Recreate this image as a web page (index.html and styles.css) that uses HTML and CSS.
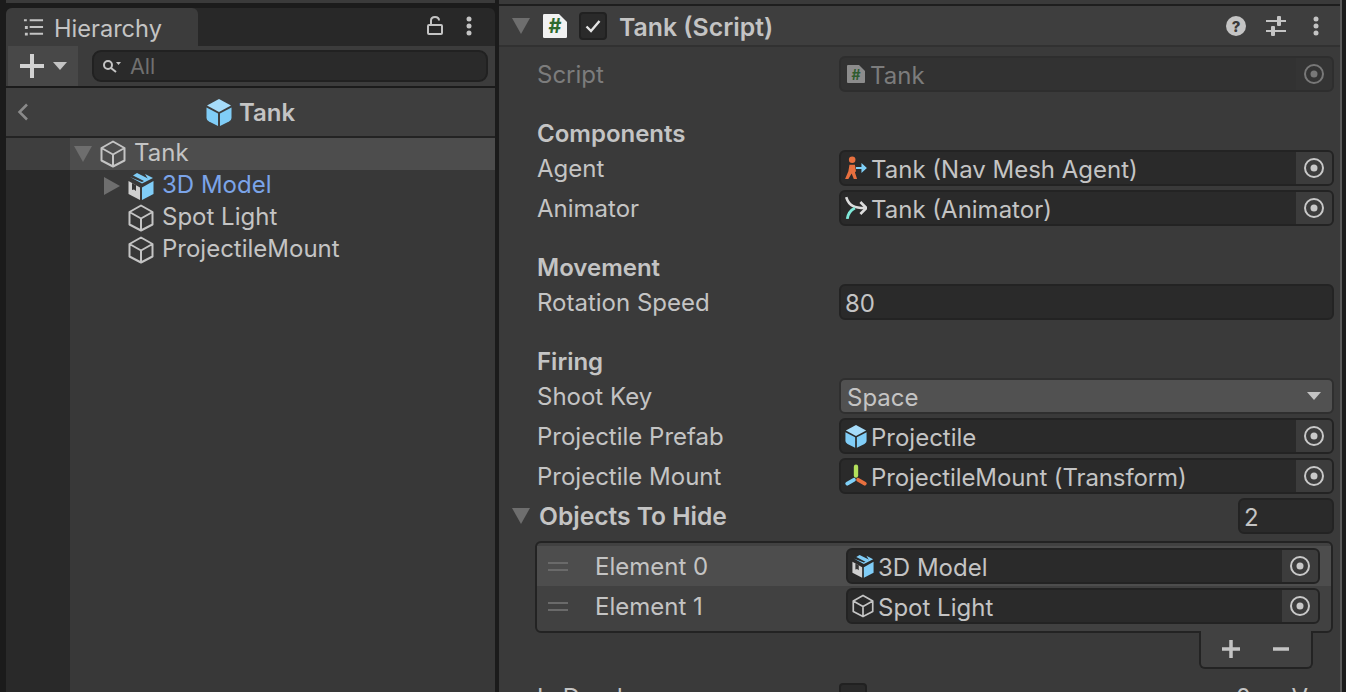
FILE: index.html
```html
<!DOCTYPE html>
<html>
<head>
<meta charset="UTF-8">
<title>Tank</title>
<link rel="stylesheet" href="styles.css">
</head>
<body>
<svg class="defs" width="0" height="0">
	<symbol id="cube" viewBox="0 0 26 28">
		<path d="M13 1.500 24.500 8v12.500L13 26.500 1.500 20.500V8zM1.500 8 13 14.500 24.500 8M13 14.500v12" fill="none" stroke="#c4c4c4" stroke-width="2" stroke-linejoin="round"/>
	</symbol>
	<symbol id="prefab" viewBox="0 0 26 28">
		<path d="M13 1 25 7.500 13 14 1 7.500z" fill="#a6dcfa"/>
		<path d="M.5 9.500 12 15.500V28L3 23.500Q.5 22 .5 20z" fill="#80cdf7"/>
		<path d="M25.500 9.500 14 15.500V28l9-4.500q2.500-1.500 2.500-3.500z" fill="#80cdf7"/>
	</symbol>
	<symbol id="model" viewBox="0 0 26 28">
		<path d="M9 1 21 7 17 9.500 5 3.500z" fill="#80cdf7"/>
		<path d="M2 5 14 11.500 25 6 17 2 20 7 14 10z" fill="#80cdf7"/>
		<path d="M.5 9 12 15.500V28L.5 22z" fill="#d0d0d0"/>
		<path d="M4 11 8 13.200V19L6 17.500 4 18z" fill="#353535"/>
		<path d="M25.500 9 14 15.500V28l11.500-6z" fill="#80cdf7"/>
	</symbol>
	<symbol id="target" viewBox="0 0 20 20">
		<circle cx="10" cy="10" r="9" fill="none" stroke="currentColor" stroke-width="2"/>
		<circle cx="10" cy="10" r="3.500" fill="currentColor"/>
	</symbol>
	<symbol id="csfile" viewBox="0 0 18 18">
		<path d="M0 1Q0 0 1 0H12L18 6V17Q18 18 17 18H1Q0 18 0 17z" fill="currentColor"/>
	</symbol>
</svg>

<div class="hierarchy">
	<div class="top-strip"></div>
	<div class="tabbar">
		<div class="tab">
			<svg class="tab-icon" viewBox="0 0 22 18"><path d="M7 2h14M7 9h14M7 16h14" stroke="#c4c4c4" stroke-width="2"/><path d="M1 1h3v2H1zM2 8h3v3H2zM2 15h3v3H2z" fill="#c4c4c4"/></svg>
			<span class="tab-name">Hierarchy</span>
		</div>
		<div class="tab-tools">
			<svg class="lock" viewBox="0 0 16 20"><path d="M4 8V4.500Q4 1 8 1t4 3.500" fill="none" stroke="#c4c4c4" stroke-width="2"/><rect x="1" y="9" width="14" height="9" rx="1" fill="none" stroke="#c4c4c4" stroke-width="2"/></svg>
			<svg class="kebab" viewBox="0 0 6 20"><circle cx="3" cy="3" r="2.500"/><circle cx="3" cy="10" r="2.500"/><circle cx="3" cy="17" r="2.500"/></svg>
		</div>
	</div>
	<div class="toolbar">
		<div class="add-btn">
			<svg class="plus" viewBox="0 0 24 24"><path d="M12 0v24M0 12h24" stroke="#d2d2d2" stroke-width="4"/></svg>
			<span class="caret"></span>
		</div>
		<div class="search">
			<svg class="search-icon" viewBox="0 0 20 14"><circle cx="6" cy="6" r="4" fill="none" stroke="#c4c4c4" stroke-width="2"/><path d="M9 9l5 4" stroke="#c4c4c4" stroke-width="2"/><path d="M14 3h5l-2.500 3z" fill="#c4c4c4"/></svg>
			All
		</div>
	</div>
	<div class="crumb">
		<svg class="back" viewBox="0 0 12 18"><path d="M10 1.500 2.500 9l7.500 7.500" fill="none" stroke="#8a8a8a" stroke-width="2.500"/></svg>
		<div class="crumb-title"><svg class="ico-cube"><use href="#prefab"/></svg>Tank</div>
	</div>
	<div class="tree">
		<div class="tree-row sel"><span class="arrow-down"></span><svg class="ico-cube"><use href="#cube"/></svg><span class="tree-name">Tank</span></div>
		<div class="tree-row child"><span class="arrow-right"></span><svg class="ico-cube"><use href="#model"/></svg><span class="tree-name blue">3D Model</span></div>
		<div class="tree-row child leaf"><svg class="ico-cube"><use href="#cube"/></svg><span class="tree-name">Spot Light</span></div>
		<div class="tree-row child leaf"><svg class="ico-cube"><use href="#cube"/></svg><span class="tree-name">ProjectileMount</span></div>
	</div>
</div>

<div class="inspector">
	<div class="top-strip"></div>
	<div class="comp-head">
		<span class="arrow-down"></span>
		<div class="script-icon"><svg><use href="#csfile"/></svg><span>#</span></div>
		<div class="check"><svg viewBox="0 0 16 14"><path d="M1.500 7.500 6 12 14.500 2" fill="none" stroke="#e4e4e4" stroke-width="2.400"/></svg></div>
		<div class="comp-title">Tank (Script)</div>
		<svg class="help" viewBox="0 0 20 20"><circle cx="10" cy="10" r="10" fill="#c4c4c4"/><text x="10" y="15.500" text-anchor="middle" class="help-mark">?</text></svg>
		<svg class="sliders" viewBox="0 0 20 20"><path d="M0 5h11M15 5h5M0 15h5M9 15h11" stroke="#c4c4c4" stroke-width="2"/><rect x="11" y="0" width="4" height="10" rx="1" fill="#c4c4c4"/><rect x="5" y="10" width="4" height="10" rx="1" fill="#c4c4c4"/></svg>
		<svg class="kebab" viewBox="0 0 6 20"><circle cx="3" cy="3" r="2.500"/><circle cx="3" cy="10" r="2.500"/><circle cx="3" cy="17" r="2.500"/></svg>
	</div>

	<div class="props">
		<div class="row dim">
			<div class="label">Script</div>
			<div class="field objfield">
				<div class="mini-script"><svg><use href="#csfile"/></svg><span>#</span></div>
				<span class="val">Tank</span>
				<div class="pick"><svg><use href="#target"/></svg></div>
			</div>
		</div>

		<div class="section">Components</div>
		<div class="row">
			<div class="label">Agent</div>
			<div class="field objfield">
				<svg class="mini" viewBox="0 0 20 22"><circle cx="6.500" cy="3.500" r="3" fill="#e8703f"/><path d="M4 8h5l1 6-1 1 2 6H8L6 16 3 21H0l3-7z" fill="#e8703f"/><path d="M10 10h5V6.500l5 4.500-5 4.500V12h-5z" fill="#7fd0f8"/></svg>
				<span class="val">Tank (Nav Mesh Agent)</span>
				<div class="pick"><svg><use href="#target"/></svg></div>
			</div>
		</div>
		<div class="row">
			<div class="label">Animator</div>
			<div class="field objfield">
				<svg class="mini" viewBox="0 0 20 22"><path d="M1 1q2 6 6 8t11 2" fill="none" stroke="#dcdcdc" stroke-width="2.400"/><path d="M14 5.500l5.500 5.500-5.500 5.500" fill="none" stroke="#dcdcdc" stroke-width="2.400"/><path d="M2 21q1-7 7-10" fill="none" stroke="#7fe8d8" stroke-width="2.600"/></svg>
				<span class="val">Tank (Animator)</span>
				<div class="pick"><svg><use href="#target"/></svg></div>
			</div>
		</div>

		<div class="section">Movement</div>
		<div class="row">
			<div class="label">Rotation Speed</div>
			<div class="field"><span class="val plain">80</span></div>
		</div>

		<div class="section">Firing</div>
		<div class="row">
			<div class="label">Shoot Key</div>
			<div class="field dropdown"><span class="val plain">Space</span><span class="caret"></span></div>
		</div>
		<div class="row">
			<div class="label">Projectile Prefab</div>
			<div class="field objfield">
				<svg class="mini"><use href="#prefab"/></svg>
				<span class="val">Projectile</span>
				<div class="pick"><svg><use href="#target"/></svg></div>
			</div>
		</div>
		<div class="row">
			<div class="label">Projectile Mount</div>
			<div class="field objfield">
				<svg class="mini" viewBox="0 0 20 22"><path d="M10 2.500v8" stroke="#b4e05c" stroke-width="4" stroke-linecap="round"/><path d="M8 14.500l-6 3.500" stroke="#7fd0f8" stroke-width="3.500" stroke-linecap="round"/><path d="M12 14.500l6 3.500" stroke="#e8703f" stroke-width="3.500" stroke-linecap="round"/></svg>
				<span class="val tight">ProjectileMount (Transform)</span>
				<div class="pick"><svg><use href="#target"/></svg></div>
			</div>
		</div>

		<div class="foldout">
			<span class="arrow-down"></span>
			<div class="fold-name">Objects To Hide</div>
			<div class="field size"><span class="val plain">2</span></div>
		</div>

		<div class="list">
			<div class="item hi">
				<div class="handle"></div>
				<div class="item-label">Element 0</div>
				<div class="field objfield">
					<svg class="mini"><use href="#model"/></svg>
					<span class="val">3D Model</span>
					<div class="pick"><svg><use href="#target"/></svg></div>
				</div>
			</div>
			<div class="item">
				<div class="handle"></div>
				<div class="item-label">Element 1</div>
				<div class="field objfield">
					<svg class="mini"><use href="#cube"/></svg>
					<span class="val">Spot Light</span>
					<div class="pick"><svg><use href="#target"/></svg></div>
				</div>
			</div>
		</div>
		<div class="list-foot">
			<svg viewBox="0 0 20 20"><path d="M10 1v18M1 10h18" stroke="#c4c4c4" stroke-width="3.500"/></svg>
			<svg viewBox="0 0 20 20"><path d="M2 10h16" stroke="#c4c4c4" stroke-width="3.500"/></svg>
		</div>

		<div class="row last">
			<div class="label">Is Dead</div>
			<div class="tick"></div>
			<div class="tail">0 &nbsp;&nbsp;&nbsp;&nbsp;&nbsp;V</div>
		</div>
	</div>
</div>
</body>
</html>
```

FILE: styles.css
```css
* {
	margin: 0;
	padding: 0;
	box-sizing: border-box;
}

html, body {
	height: 100%;
	overflow: hidden;
}

body {
	display: flex;
	background: #1b1b1b;
	font-family: Inter, "Noto Sans", sans-serif;
	font-size: 24px;
	color: #c4c4c4;
	padding-left: 6px;
}

.defs {
	position: absolute;
}

.top-strip {
	height: 3px;
	background: #3a3a3a;
}

/* left panel */
.hierarchy {
	width: 489px;
	height: 100%;
	display: flex;
	flex-direction: column;
	margin-right: 4px;
}

.tabbar {
	height: 38px;
	margin-top: 5px;
	background: #282828;
	display: flex;
	justify-content: space-between;
	border-radius: 6px 6px 0 0;
}

.tab {
	width: 192px;
	background: #3c3c3c;
	border-radius: 6px 6px 0 0;
	display: flex;
	align-items: center;
	padding-left: 17px;
	gap: 10px;
}

.tab-icon {
	width: 21px;
	height: 18px;
}

.tab-name {
	font-size: 23.6px;
	padding-top: 2px;
}

.tab-tools {
	display: flex;
	align-items: center;
	gap: 23px;
	padding-right: 23px;
	padding-bottom: 2px;
}

.lock {
	width: 16px;
	height: 20px;
}

.kebab {
	width: 6px;
	height: 20px;
	fill: #c4c4c4;
}

.toolbar {
	height: 40px;
	background: #3c3c3c;
	display: flex;
	align-items: center;
	padding-right: 7px;
}

.add-btn {
	width: 70px;
	height: 40px;
	margin-left: 2px;
	background: #484848;
	display: flex;
	align-items: center;
	padding-left: 12px;
	gap: 9px;
}

.plus {
	width: 24px;
	height: 24px;
}

.caret {
	width: 0;
	height: 0;
	border-left: 7px solid transparent;
	border-right: 7px solid transparent;
	border-top: 8px solid #c4c4c4;
}

.search {
	flex: 1;
	height: 32px;
	margin-left: 14px;
	background: #2a2a2a;
	border: 2px solid #212121;
	border-radius: 9px;
	display: flex;
	align-items: center;
	padding-left: 8px;
	color: #707070;
	font-size: 21.5px;
	gap: 8px;
}

.search-icon {
	width: 20px;
	height: 14px;
}

.crumb {
	height: 50px;
	margin-top: 2px;
	background: #3e3e3e;
	border-bottom: 2px solid #232323;
	display: grid;
	grid-template-columns: 1fr auto 1fr;
	align-items: center;
	font-weight: 600;
}

.back {
	width: 12px;
	height: 18px;
	margin-left: 11px;
}

.crumb-title {
	display: flex;
	align-items: center;
	gap: 7px;
}

.ico-cube {
	width: 26px;
	height: 28px;
	flex: none;
}

.tree {
	flex: 1;
	background: linear-gradient(to right, #292929 64px, #383838 64px);
}

.tree-row {
	height: 32px;
	display: flex;
	align-items: center;
	padding-left: 68px;
}

.tree-row.sel {
	background: linear-gradient(to right, #3e3e3e 64px, #4d4d4d 64px);
}

.tree-row.child {
	padding-left: 98px;
}

.tree-row.leaf {
	padding-left: 122px;
}

.tree-name {
	margin-left: 8px;
	padding-bottom: 3px;
}

.blue {
	color: #7ba4e8;
}

.arrow-down {
	width: 0;
	height: 0;
	flex: none;
	border-left: 9px solid transparent;
	border-right: 9px solid transparent;
	border-top: 16px solid #6e6e6e;
	margin-right: 8px;
}

.arrow-right {
	width: 0;
	height: 0;
	flex: none;
	border-top: 9px solid transparent;
	border-bottom: 9px solid transparent;
	border-left: 16px solid #6e6e6e;
	margin-right: 8px;
}

/* right panel */
.inspector {
	width: 843px;
	height: 100%;
	background: #3a3a3a;
	border-right: 2px solid #5a5a5a;
	display: flex;
	flex-direction: column;
}

.inspector .top-strip {
	height: 4px;
	flex: none;
}

.comp-head {
	height: 43px;
	flex: none;
	border-top: 2px solid #1e1e1e;
	border-bottom: 2px solid #313131;
	background: #3e3e3e;
	display: flex;
	align-items: center;
	padding-left: 13px;
}

.comp-head .arrow-down {
	margin-right: 13px;
}

.script-icon {
	width: 24px;
	height: 28px;
	position: relative;
	color: #f2f2f2;
	display: flex;
	align-items: center;
	justify-content: center;
}

.script-icon svg {
	position: absolute;
	inset: 0;
	width: 100%;
	height: 100%;
}

.script-icon span {
	position: relative;
	color: #2f6b2f;
	font-weight: 700;
	font-size: 20px;
}

.check {
	width: 28px;
	height: 28px;
	margin-left: 12px;
	background: #2a2a2a;
	border: 2px solid #212121;
	border-radius: 4px;
	display: flex;
	align-items: center;
	justify-content: center;
}

.check svg {
	width: 16px;
	height: 14px;
}

.comp-title {
	margin-left: 12px;
	padding-top: 2px;
	font-size: 24.8px;
	font-weight: 600;
	flex: 1;
}

.help {
	width: 20px;
	height: 20px;
}

.help-mark {
	font-size: 15px;
	font-weight: 800;
	fill: #3a3a3a;
}

.sliders {
	width: 20px;
	height: 20px;
	margin-left: 20px;
}

.comp-head .kebab {
	margin-left: 27px;
	margin-right: 21px;
}

.props {
	padding-top: 9px;
}

.row {
	height: 36px;
	margin-bottom: 4px;
	display: flex;
	align-items: center;
	padding: 0 6px 0 38px;
}

.label {
	width: 302px;
	flex: none;
}

.dim .label {
	color: #7c7c7c;
}

.section {
	height: 34px;
	margin-top: 24px;
	padding-left: 38px;
	display: flex;
	align-items: center;
	font-weight: 600;
}

.field {
	flex: 1;
	height: 36px;
	background: #2a2a2a;
	border: 2px solid #232323;
	border-radius: 6px;
	display: flex;
	align-items: center;
	overflow: hidden;
}

.val {
	flex: 1;
	padding-top: 2px;
	margin-left: 4px;
	white-space: nowrap;
}

.val.plain {
	margin-left: 4px;
}

.val.tight {
	letter-spacing: -0.1px;
}

.dim .field {
	background: #323232;
	border-color: #2e2e2e;
}

.dim .val {
	color: #7c7c7c;
	margin-left: 7px;
}

.mini {
	width: 22px;
	height: 24px;
	margin-left: 4px;
	flex: none;
}

.mini-script {
	width: 18px;
	height: 18px;
	margin-left: 6px;
	margin-right: -2px;
	position: relative;
	color: #8c8c8c;
	display: flex;
	align-items: center;
	justify-content: center;
	flex: none;
}

.mini-script svg {
	position: absolute;
	inset: 0;
	width: 100%;
	height: 100%;
}

.mini-script span {
	position: relative;
	font-size: 14px;
	font-weight: 700;
	color: #2f5c2f;
}

.pick {
	width: 36px;
	height: 100%;
	flex: none;
	background: #3c3c3c;
	display: flex;
	align-items: center;
	justify-content: center;
	color: #c8c8c8;
}

.dim .pick {
	background: #343434;
	color: #787878;
}

.pick svg {
	width: 20px;
	height: 20px;
}

.dropdown {
	background: #515151;
	border-color: #2f2f2f;
	padding-right: 11px;
}

.dropdown .val {
	margin-left: 6px;
}

.foldout {
	height: 36px;
	display: flex;
	align-items: center;
	padding: 0 6px 0 13px;
	margin-bottom: 7px;
}

.foldout .arrow-down {
	margin-right: 9px;
}

.fold-name {
	flex: 1;
	font-size: 24.6px;
	font-weight: 600;
}

.size {
	flex: none;
	width: 96px;
}

.list {
	margin: 0 7px 0 36px;
	height: 92px;
	background: #414141;
	border: 2px solid #232323;
	border-radius: 6px;
	padding-top: 3px;
}

.item {
	height: 40px;
	display: flex;
	align-items: center;
	padding-right: 11px;
}

.item.hi {
	background: #4d4d4d;
}

.handle {
	width: 20px;
	height: 9px;
	margin-left: 11px;
	border-top: 2px solid #6a6a6a;
	border-bottom: 2px solid #6a6a6a;
	flex: none;
}

.item-label {
	width: 251px;
	margin-left: 27px;
	flex: none;
}

.list-foot {
	width: 114px;
	height: 38px;
	margin: -2px 27px 0 auto;
	position: relative;
	background: #414141;
	border: 2px solid #232323;
	border-top: 0;
	border-radius: 0 0 6px 6px;
	display: flex;
	justify-content: center;
	align-items: center;
	gap: 30px;
}

.list-foot svg {
	width: 20px;
	height: 20px;
}

.row.last {
	margin-top: 10px;
}

.tick {
	width: 28px;
	height: 28px;
	background: #2a2a2a;
	border: 2px solid #212121;
	border-radius: 4px;
}

.tail {
	flex: 1;
	text-align: right;
	padding-right: 26px;
}
```
